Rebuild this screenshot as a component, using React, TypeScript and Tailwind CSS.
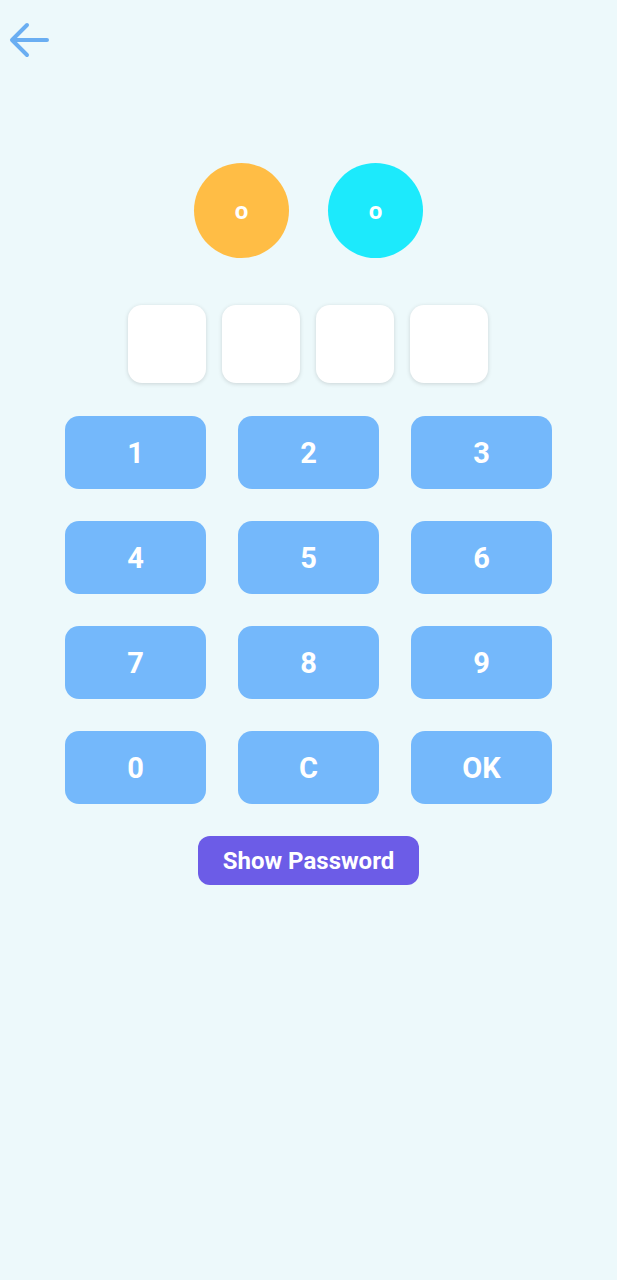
export default function App() {
  const keys = ["1", "2", "3", "4", "5", "6", "7", "8", "9", "0", "C", "OK"];

  return (
    <div className="min-h-[1280px] w-full bg-[#edf9fb] font-['Roboto',sans-serif]">
      <div className="h-[80px] pl-[9px] pt-[22px]">
        <svg width="40" height="36" viewBox="0 0 40 36" fill="none">
          <path
            d="M38 18H4M18 3L3 18l15 15"
            stroke="#6aaef2"
            strokeWidth="4"
            strokeLinecap="round"
            strokeLinejoin="round"
          />
        </svg>
      </div>

      <div className="mt-[83px] flex justify-center gap-[39px]">
        <div className="flex h-[95px] w-[95px] items-center justify-center rounded-full bg-[#ffbd45] text-[24px] font-bold text-white">
          o
        </div>
        <div className="flex h-[95px] w-[95px] items-center justify-center rounded-full bg-[#1ceafc] text-[24px] font-bold text-white">
          o
        </div>
      </div>

      <div className="mt-[47px] flex justify-center gap-[16px] pr-[2px]">
        {[0, 1, 2, 3].map((i) => (
          <div
            key={i}
            className="h-[78px] w-[78px] rounded-[14px] bg-white shadow-[0_1px_4px_rgba(0,0,0,0.15)]"
          />
        ))}
      </div>

      <div className="mx-auto mt-[33px] grid w-[487px] grid-cols-3 gap-x-[32px] gap-y-[32px]">
        {keys.map((k) => (
          <button
            key={k}
            className="flex h-[73px] items-center justify-center rounded-[14px] bg-[#74b8fb] pt-[2px] text-[29px] font-bold text-white"
          >
            {k}
          </button>
        ))}
      </div>

      <div className="mt-[32px] flex justify-center">
        <button className="h-[49px] w-[221px] rounded-[12px] bg-[#6c5ce7] text-[24px] font-bold text-white">
          Show Password
        </button>
      </div>
    </div>
  );
}
